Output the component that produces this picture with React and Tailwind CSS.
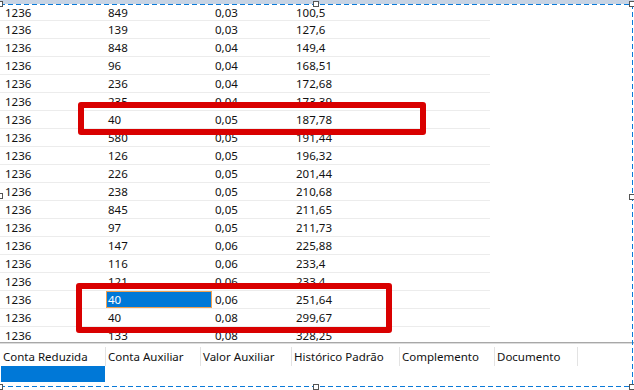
import React from "react";

const rows = [
  ["1236", "849", "0,03", "100,5"],
  ["1236", "139", "0,03", "127,6"],
  ["1236", "848", "0,04", "149,4"],
  ["1236", "96", "0,04", "168,51"],
  ["1236", "236", "0,04", "172,68"],
  ["1236", "235", "0,04", "173,39"],
  ["1236", "40", "0,05", "187,78"],
  ["1236", "580", "0,05", "191,44"],
  ["1236", "126", "0,05", "196,32"],
  ["1236", "226", "0,05", "201,44"],
  ["1236", "238", "0,05", "210,68"],
  ["1236", "845", "0,05", "211,65"],
  ["1236", "97", "0,05", "211,73"],
  ["1236", "147", "0,06", "225,88"],
  ["1236", "116", "0,06", "233,4"],
  ["1236", "121", "0,06", "233,4"],
  ["1236", "40", "0,06", "251,64"],
  ["1236", "40", "0,08", "299,67"],
  ["1236", "133", "0,08", "328,25"],
];

const headers = [
  ["Conta Reduzida", "w-[106px] pl-[3px]"],
  ["Conta Auxiliar", "w-[95px] pl-[2px]"],
  ["Valor Auxiliar", "w-[91px] pl-[2px]"],
  ["Histórico Padrão", "w-[108px] pl-[2px]"],
  ["Complemento", "w-[95px] pl-[2px]"],
  ["Documento", "w-[83px] pl-[2px]"],
];

function Handle({ className }) {
  return (
    <div
      className={
        "absolute w-[6px] h-[6px] border border-[#555555] bg-white " + className
      }
    />
  );
}

export default function App() {
  return (
    <div
      className="relative w-[634px] h-[390px] overflow-hidden bg-white text-[11.5px] text-[#111]"
      style={{ fontFamily: '"Noto Sans", "Open Sans", sans-serif' }}
    >
      {/* top band */}
      <div className="h-[4px] bg-[#c8d4e4]" />
      <div className="h-px bg-[repeating-linear-gradient(90deg,#0a7ad8_0_5px,transparent_5px_8px)]" />

      {/* data rows */}
      <div className="h-[337px] overflow-hidden">
        {rows.map((r, i) => {
          const selected = i === 16;
          return (
            <div
              key={i}
              className={
                "flex w-[490px] items-center border-b border-[#ececec] leading-none " +
                (i === 0 ? "h-[16px]" : "h-[18px]")
              }
            >
              <div className="w-[106px] pl-[5px]">{r[0]}</div>
              {selected ? (
                <div className="w-[106px] h-[17px] flex items-center pl-[1px] bg-[#0078d7] border border-[#f0a050] text-white">
                  {r[1]}
                </div>
              ) : (
                <div className="w-[106px] pl-[2px]">{r[1]}</div>
              )}
              <div className="w-[81px] pl-[3px]">{r[2]}</div>
              <div className="w-[100px] pl-[3px]">{r[3]}</div>
            </div>
          );
        })}
      </div>

      {/* bottom grid header */}
      <div className="h-px bg-[#a8a8a8]" />
      <div className="h-px bg-[#dcdcdc]" />
      <div className="flex h-[22px] pt-[3px]">
        {headers.map(([t, c]) => (
          <div
            key={t}
            className={"flex items-center border-r border-[#e3e3e3] whitespace-nowrap " + c}
          >
            {t}
          </div>
        ))}
      </div>
      <div className="ml-px w-[104px] h-[16px] bg-[#0078d7]" />

      {/* selection overlay */}
      <div className="absolute left-0 right-0 top-[386px] h-px bg-[repeating-linear-gradient(90deg,#0a7ad8_0_5px,transparent_5px_8px)]" />
      <div className="absolute top-[4px] left-[632px] w-px h-[383px] bg-[repeating-linear-gradient(180deg,#0a7ad8_0_5px,transparent_5px_8px)]" />
      <Handle className="left-[-3px] top-[1px]" />
      <Handle className="left-[313px] top-[1px]" />
      <Handle className="left-[629px] top-[1px]" />
      <Handle className="left-[-3px] top-[193px]" />
      <Handle className="left-[629px] top-[194px]" />
      <Handle className="left-[-3px] top-[384px]" />
      <Handle className="left-[313px] top-[384px]" />
      <Handle className="left-[629px] top-[384px]" />

      {/* red highlight boxes */}
      <div className="absolute left-[78px] top-[102px] w-[348px] h-[33px] border-[6px] border-[#d90000] rounded-[3px]" />
      <div className="absolute left-[76px] top-[283px] w-[316px] h-[50px] border-[6px] border-[#d90000] rounded-[3px]" />
    </div>
  );
}
